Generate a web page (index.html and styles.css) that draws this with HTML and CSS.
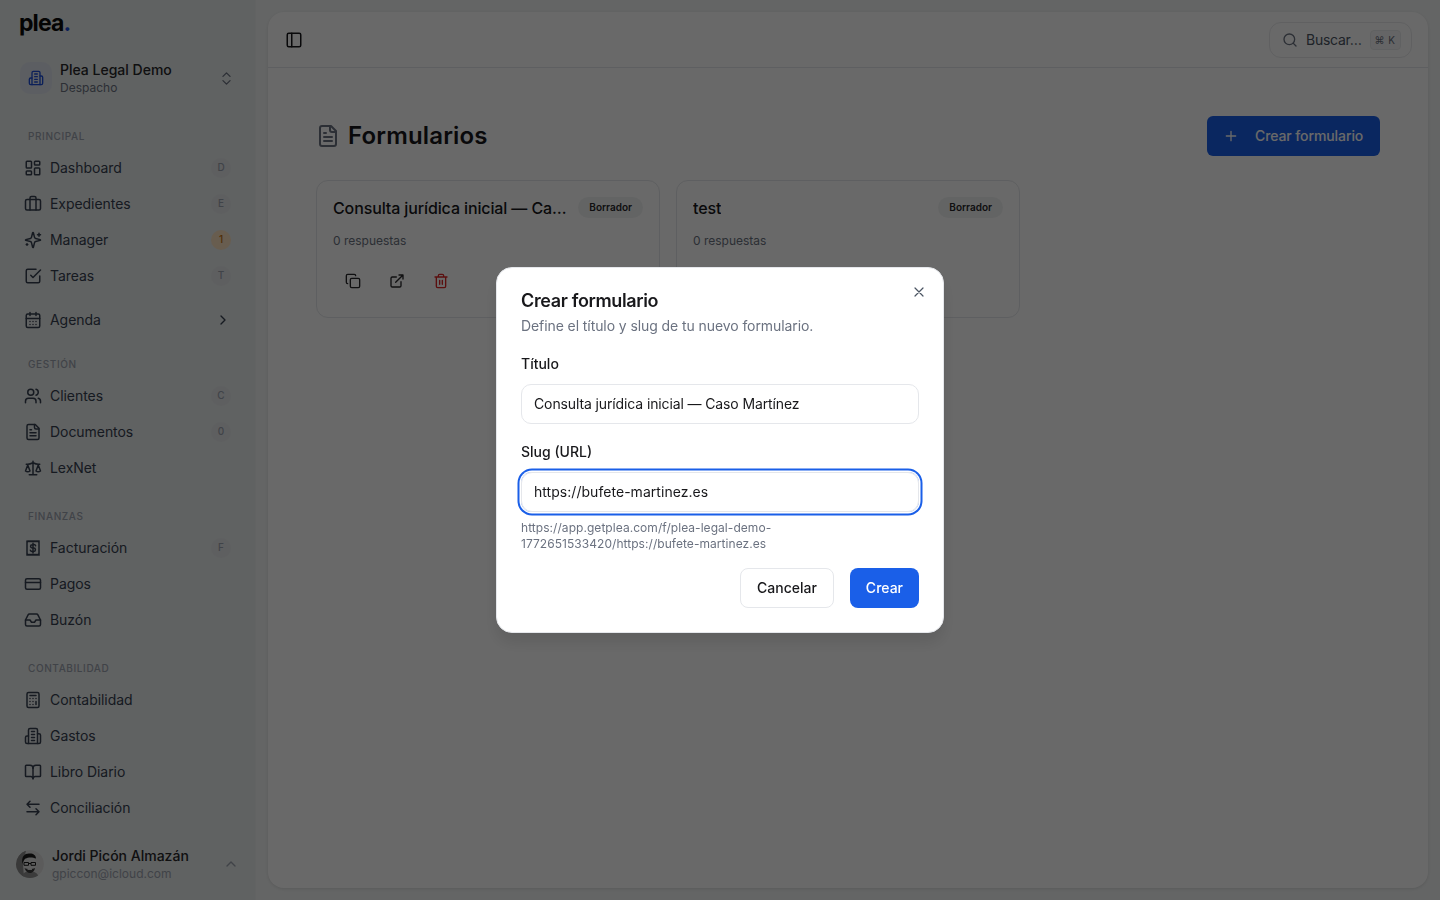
FILE: index.html
```html
<!DOCTYPE html>
<html lang="es">
<head>
<meta charset="utf-8">
<title>Formularios</title>
<link rel="stylesheet" href="styles.css">
</head>
<body>
<svg class="defs" aria-hidden="true">
  <symbol id="i-dash" viewBox="0 0 24 24"><rect x="3" y="3" width="7" height="9" rx="1"/><rect x="14" y="3" width="7" height="5" rx="1"/><rect x="14" y="12" width="7" height="9" rx="1"/><rect x="3" y="16" width="7" height="5" rx="1"/></symbol>
  <symbol id="i-brief" viewBox="0 0 24 24"><path d="M16 20V4a2 2 0 0 0-2-2h-4a2 2 0 0 0-2 2v16"/><rect x="2" y="6" width="20" height="14" rx="2"/></symbol>
  <symbol id="i-spark" viewBox="0 0 24 24"><path d="M9.937 15.5A2 2 0 0 0 8.5 14.063l-6.135-1.582a.5.5 0 0 1 0-.962L8.5 9.936A2 2 0 0 0 9.937 8.5l1.582-6.135a.5.5 0 0 1 .963 0L14.063 8.5A2 2 0 0 0 15.5 9.937l6.135 1.581a.5.5 0 0 1 0 .964L15.5 14.063a2 2 0 0 0-1.437 1.437l-1.582 6.135a.5.5 0 0 1-.963 0z"/><path d="M20 3v4M22 5h-4M4 17v2M5 18H3"/></symbol>
  <symbol id="i-check" viewBox="0 0 24 24"><path d="m9 11 3 3L22 4"/><path d="M21 12v7a2 2 0 0 1-2 2H5a2 2 0 0 1-2-2V5a2 2 0 0 1 2-2h11"/></symbol>
  <symbol id="i-cal" viewBox="0 0 24 24"><path d="M8 2v4M16 2v4"/><rect x="3" y="4" width="18" height="18" rx="2"/><path d="M3 10h18M8 14h.01M12 14h.01M16 14h.01M8 18h.01M12 18h.01M16 18h.01"/></symbol>
  <symbol id="i-users" viewBox="0 0 24 24"><path d="M16 21v-2a4 4 0 0 0-4-4H6a4 4 0 0 0-4 4v2"/><circle cx="9" cy="7" r="4"/><path d="M22 21v-2a4 4 0 0 0-3-3.87M16 3.13a4 4 0 0 1 0 7.75"/></symbol>
  <symbol id="i-file" viewBox="0 0 24 24"><path d="M15 2H6a2 2 0 0 0-2 2v16a2 2 0 0 0 2 2h12a2 2 0 0 0 2-2V7Z"/><path d="M14 2v4a2 2 0 0 0 2 2h4M10 9H8M16 13H8M16 17H8"/></symbol>
  <symbol id="i-scale" viewBox="0 0 24 24"><path d="m16 16 3-8 3 8c-.87.65-1.92 1-3 1s-2.13-.35-3-1Z"/><path d="m2 16 3-8 3 8c-.87.65-1.92 1-3 1s-2.13-.35-3-1Z"/><path d="M7 21h10M12 3v18M3 7h2c2 0 5-1 7-2 2 1 5 2 7 2h2"/></symbol>
  <symbol id="i-bill" viewBox="0 0 24 24"><path d="M4 2.500l1.330 1 1.330-1 1.330 1 1.340-1 1.330 1 1.340-1 1.330 1 1.330-1 1.340 1 1.330-1 1.330 1L20 2.500v19l-1.330-1-1.330 1-1.340-1-1.330 1-1.330-1-1.340 1-1.330-1-1.340 1-1.330-1-1.330 1-1.340-1L4 21.500Z"/><path d="M15.500 9a2.300 2.300 0 0 0-2.300-1.500h-2.200a2.200 2.200 0 0 0 0 4.500h2a2.200 2.200 0 0 1 0 4.500h-2.200A2.300 2.300 0 0 1 8.500 15M12 5.500v13"/></symbol>
  <symbol id="i-card" viewBox="0 0 24 24"><rect x="2" y="5" width="20" height="14" rx="2"/><path d="M2 10h20"/></symbol>
  <symbol id="i-inbox" viewBox="0 0 24 24"><path d="M22 12h-6l-2 3h-4l-2-3H2"/><path d="M5.450 5.110 2 12v6a2 2 0 0 0 2 2h16a2 2 0 0 0 2-2v-6l-3.450-6.890A2 2 0 0 0 16.760 4H7.240a2 2 0 0 0-1.790 1.110z"/></symbol>
  <symbol id="i-calc" viewBox="0 0 24 24"><rect x="4" y="2" width="16" height="20" rx="2"/><path d="M8 6h8M16 14v4M16 10h.01M12 10h.01M8 10h.01M12 14h.01M8 14h.01M12 18h.01M8 18h.01"/></symbol>
  <symbol id="i-bldg" viewBox="0 0 24 24"><path d="M6 22V4a2 2 0 0 1 2-2h8a2 2 0 0 1 2 2v18Z"/><path d="M6 12H4a2 2 0 0 0-2 2v6a2 2 0 0 0 2 2h2M18 9h2a2 2 0 0 1 2 2v9a2 2 0 0 1-2 2h-2M10 6h4M10 10h4M10 14h4M10 18h4"/></symbol>
  <symbol id="i-book" viewBox="0 0 24 24"><path d="M12 7v14"/><path d="M3 18a1 1 0 0 1-1-1V4a1 1 0 0 1 1-1h5a4 4 0 0 1 4 4 4 4 0 0 1 4-4h5a1 1 0 0 1 1 1v13a1 1 0 0 1-1 1h-6a3 3 0 0 0-3 3 3 3 0 0 0-3-3z"/></symbol>
  <symbol id="i-swap" viewBox="0 0 24 24"><path d="M8 3 4 7l4 4M4 7h16M16 21l4-4-4-4M20 17H4"/></symbol>
  <symbol id="i-updown" viewBox="0 0 24 24"><path d="m7 15 5 5 5-5M7 9l5-5 5 5"/></symbol>
  <symbol id="i-right" viewBox="0 0 24 24"><path d="m9 18 6-6-6-6"/></symbol>
  <symbol id="i-up" viewBox="0 0 24 24"><path d="m18 15-6-6-6 6"/></symbol>
  <symbol id="i-panel" viewBox="0 0 24 24"><rect x="3" y="3" width="18" height="18" rx="2"/><path d="M9 3v18"/></symbol>
  <symbol id="i-search" viewBox="0 0 24 24"><path d="m21 21-4.300-4.300"/><circle cx="11" cy="11" r="8"/></symbol>
  <symbol id="i-plus" viewBox="0 0 24 24"><path d="M5 12h14M12 5v14"/></symbol>
  <symbol id="i-copy" viewBox="0 0 24 24"><rect x="8" y="8" width="14" height="14" rx="2"/><path d="M4 16c-1.100 0-2-.9-2-2V4c0-1.100.9-2 2-2h10c1.100 0 2 .9 2 2"/></symbol>
  <symbol id="i-ext" viewBox="0 0 24 24"><path d="M15 3h6v6M10 14 21 3M18 13v6a2 2 0 0 1-2 2H5a2 2 0 0 1-2-2V8a2 2 0 0 1 2-2h6"/></symbol>
  <symbol id="i-trash" viewBox="0 0 24 24"><path d="M3 6h18M19 6v14c0 1-1 2-2 2H7c-1 0-2-1-2-2V6M8 6V4c0-1 1-2 2-2h4c1 0 2 1 2 2v2M10 11v6M14 11v6"/></symbol>
  <symbol id="i-x" viewBox="0 0 24 24"><path d="M18 6 6 18M6 6l12 12"/></symbol>
</svg>

<div class="app">
  <aside class="sidebar">
    <div class="logo">plea<span class="logo-dot">.</span></div>
    <div class="org">
      <span class="org-icon"><svg class="ic ic-16"><use href="#i-bldg"/></svg></span>
      <div class="org-text">
        <div class="org-name">Plea Legal Demo</div>
        <div class="org-sub">Despacho</div>
      </div>
      <svg class="ic ic-17 muted"><use href="#i-updown"/></svg>
    </div>

    <nav class="nav">
      <div class="group group-first">
        <div class="group-label">PRINCIPAL</div>
        <a class="item"><svg class="ic"><use href="#i-dash"/></svg><span class="item-text">Dashboard</span><span class="key">D</span></a>
        <a class="item"><svg class="ic"><use href="#i-brief"/></svg><span class="item-text">Expedientes</span><span class="key">E</span></a>
        <a class="item"><svg class="ic"><use href="#i-spark"/></svg><span class="item-text">Manager</span><span class="key key-alert">1</span></a>
        <a class="item"><svg class="ic"><use href="#i-check"/></svg><span class="item-text">Tareas</span><span class="key">T</span></a>
        <a class="item item-agenda"><svg class="ic"><use href="#i-cal"/></svg><span class="item-text">Agenda</span><svg class="ic ic-16"><use href="#i-right"/></svg></a>
      </div>
      <div class="group group-tight">
        <div class="group-label">GESTIÓN</div>
        <a class="item"><svg class="ic"><use href="#i-users"/></svg><span class="item-text">Clientes</span><span class="key">C</span></a>
        <a class="item"><svg class="ic"><use href="#i-file"/></svg><span class="item-text">Documentos</span><span class="key">0</span></a>
        <a class="item"><svg class="ic"><use href="#i-scale"/></svg><span class="item-text">LexNet</span></a>
      </div>
      <div class="group">
        <div class="group-label">FINANZAS</div>
        <a class="item"><svg class="ic"><use href="#i-bill"/></svg><span class="item-text">Facturación</span><span class="key">F</span></a>
        <a class="item"><svg class="ic"><use href="#i-card"/></svg><span class="item-text">Pagos</span></a>
        <a class="item"><svg class="ic"><use href="#i-inbox"/></svg><span class="item-text">Buzón</span></a>
      </div>
      <div class="group">
        <div class="group-label">CONTABILIDAD</div>
        <a class="item"><svg class="ic"><use href="#i-calc"/></svg><span class="item-text">Contabilidad</span></a>
        <a class="item"><svg class="ic"><use href="#i-bldg"/></svg><span class="item-text">Gastos</span></a>
        <a class="item"><svg class="ic"><use href="#i-book"/></svg><span class="item-text">Libro Diario</span></a>
        <a class="item"><svg class="ic"><use href="#i-swap"/></svg><span class="item-text">Conciliación</span></a>
      </div>
    </nav>

    <div class="user">
      <svg class="avatar" viewBox="0 0 28 28" aria-hidden="true">
        <circle cx="14" cy="14" r="14" fill="#dedede"/>
        <path d="M0 14A14 14 0 0 1 10 .6L7 14l1 14H7A14 14 0 0 1 0 14z" fill="#8a8a8a"/>
        <path d="M5 28c1-5 5-7 9-7s8 2 9 7z" fill="#8f8f8f"/>
        <ellipse cx="14" cy="14" rx="6.500" ry="8" fill="#e4e4e4"/>
        <path d="M6.500 14C5 6 9 3 14 3.500c3.500 0 6 2 6 5-3-1.500-8-1.500-10.500 0-1.500 1-2.500 3-3 5.500z" fill="#1c1c1c"/>
        <path d="M8 12.500h4.500v2.800H8zM15 12.500h4.500v2.800H15zM12.500 13.500H15" fill="none" stroke="#1c1c1c" stroke-width="1"/>
        <path d="M8.500 18c2 1.500 8 1.500 10.500 0-.5 3.500-3 5-5 5s-4.500-1.500-5.500-5z" fill="#3a3a3a"/>
        <path d="M11.500 19.500h4.500" stroke="#e8e8e8" stroke-width=".9"/>
      </svg>
      <div class="user-text">
        <div class="user-name">Jordi Picón Almazán</div>
        <div class="user-mail">gpiccon@icloud.com</div>
      </div>
      <svg class="ic ic-16 faint"><use href="#i-up"/></svg>
    </div>
  </aside>

  <main class="main">
    <header class="topbar">
      <svg class="ic"><use href="#i-panel"/></svg>
      <div class="search">
        <svg class="ic ic-16 muted"><use href="#i-search"/></svg>
        <span class="search-text">Buscar…</span>
        <kbd class="kbd">⌘ K</kbd>
      </div>
    </header>
    <section class="content">
      <div class="page-head">
        <h1 class="page-title"><svg class="ic ic-24 muted"><use href="#i-file"/></svg>Formularios</h1>
        <button class="btn-primary-lg"><svg class="ic ic-16"><use href="#i-plus"/></svg><span class="btn-label">Crear formulario</span></button>
      </div>
      <div class="cards">
        <article class="card">
          <div class="card-top">
            <h2 class="card-title">Consulta jurídica inicial — Caso Martínez</h2>
            <span class="badge">Borrador</span>
          </div>
          <p class="card-meta">0 respuestas</p>
          <div class="card-actions">
            <span class="act"><svg class="ic ic-16"><use href="#i-copy"/></svg></span>
            <span class="act"><svg class="ic ic-16"><use href="#i-ext"/></svg></span>
            <span class="act act-danger"><svg class="ic ic-16"><use href="#i-trash"/></svg></span>
          </div>
        </article>
        <article class="card">
          <div class="card-top">
            <h2 class="card-title">test</h2>
            <span class="badge">Borrador</span>
          </div>
          <p class="card-meta">0 respuestas</p>
          <div class="card-actions">
            <span class="act"><svg class="ic ic-16"><use href="#i-copy"/></svg></span>
            <span class="act"><svg class="ic ic-16"><use href="#i-ext"/></svg></span>
            <span class="act act-danger"><svg class="ic ic-16"><use href="#i-trash"/></svg></span>
          </div>
        </article>
      </div>
    </section>
  </main>
</div>

<div class="overlay">
  <div class="modal" role="dialog" aria-modal="true">
    <svg class="ic ic-16 modal-close"><use href="#i-x"/></svg>
    <h2 class="modal-title">Crear formulario</h2>
    <p class="modal-desc">Define el título y slug de tu nuevo formulario.</p>
    <label class="field-label">Título</label>
    <div class="input input-title">Consulta jurídica inicial — Caso Martínez</div>
    <label class="field-label">Slug (URL)</label>
    <div class="input input-focus">https://bufete-martinez.es</div>
    <p class="helper">https://app.getplea.com/f/plea-legal-demo-<br>1772651533420/https://bufete-martinez.es</p>
    <div class="modal-actions">
      <button class="btn btn-outline">Cancelar</button>
      <button class="btn btn-primary">Crear</button>
    </div>
  </div>
</div>
</body>
</html>
```

FILE: styles.css
```css
* { box-sizing: border-box; }
html, body { margin: 0; height: 100%; }
body {
  font-family: "Inter", "Liberation Sans", sans-serif;
  font-size: 14px;
  color: #18181b;
  background: #f2f4f4;
  overflow: hidden;
}
.defs { position: absolute; width: 0; height: 0; }
.ic {
  width: 18px; height: 18px; flex: none;
  fill: none; stroke: currentColor; stroke-width: 2;
  stroke-linecap: round; stroke-linejoin: round;
}
.ic-16 { width: 16px; height: 16px; }
.ic-17 { width: 17px; height: 17px; stroke-width: 1.800; }
.ic-24 { width: 24px; height: 24px; }
.muted { color: #6b7280; }
.faint { color: #9ca3af; }

.app { display: flex; height: 900px; }

/* Sidebar */
.sidebar {
  width: 256px; flex: none; height: 900px;
  display: flex; flex-direction: column;
  background: #e9eded;
  border-right: 1px solid #eef1f1;
}
.logo {
  margin: 8px 0 0 19px; height: 30px;
  font-size: 23px; line-height: 30px; font-weight: 700; letter-spacing: -.9px; color: #0a0a0a;
}
.logo-dot { color: #1d4ed8; }
.org { display: flex; align-items: center; margin: 24px 20px 0 20px; height: 32px; }
.org-icon {
  width: 32px; height: 32px; border-radius: 10px; flex: none;
  background: #e0e5ee; color: #1d4ed8;
  display: flex; align-items: center; justify-content: center;
  margin-right: 8px;
}
.org-text { flex: 1; min-width: 0; }
.org-name { font-size: 14px; line-height: 18px; font-weight: 500; color: #27272a; }
.org-sub { margin-top: 1px; font-size: 12px; line-height: 16px; color: #6b7280; }
.nav { padding: 0 16px; flex: 1; }
.group { padding-top: 14px; }
.group-first { padding-top: 26px; }
.group-tight { padding-top: 10px; }
.group-label {
  height: 30px; padding: 10px 0 0 12px;
  font-size: 10px; line-height: 12px; font-weight: 500; letter-spacing: .6px; color: #9ca3af;
}
.item {
  display: flex; align-items: center; height: 36px;
  padding: 0 8px; color: #374151;
}
.item-agenda { margin-top: 8px; }
.item-text { flex: 1; margin-left: 8px; padding-bottom: 2px; font-size: 14px; letter-spacing: -.05px; }
.key {
  width: 20px; height: 20px; border-radius: 50%; margin-top: -1px; padding-bottom: 1px;
  background: #e4e7ea; color: #9ca3af;
  font-size: 10px; font-weight: 500;
  display: flex; align-items: center; justify-content: center;
}
.key-alert { background: #fde2bf; color: #c2700f; }
.user { display: flex; align-items: center; height: 36px; margin: 0 16px 18px 16px; }
.avatar { width: 28px; height: 28px; flex: none; border-radius: 50%; margin-right: 8px; }
.user-text { flex: 1; min-width: 0; }
.user-name { font-size: 14px; line-height: 18px; font-weight: 500; color: #27272a; }
.user-mail { margin-top: 1px; font-size: 12px; line-height: 16px; color: #9ca3af; }

/* Main */
.main {
  flex: 1; margin: 12px;
  background: #fff; border-radius: 16px;
  box-shadow: 0 1px 3px rgba(0,0,0,.1);
  display: flex; flex-direction: column; min-width: 0;
}
.topbar {
  height: 56px; flex: none; display: flex; align-items: center; justify-content: space-between;
  padding: 0 16px 0 17px; border-bottom: 1px solid #e5e7eb;
}
.search {
  width: 143px; height: 36px; border: 1px solid #e9eaec; border-radius: 12px;
  display: flex; align-items: center; padding: 0 12px; gap: 8px;
}
.search-text { color: #4b5563; font-size: 14px; flex: 1; white-space: nowrap; letter-spacing: -.25px; }
.kbd {
  font-family: "Inter", sans-serif; font-size: 10px; letter-spacing: .5px; color: #6b7280;
  width: 31px; height: 20px; border: 1px solid #eaebed; border-radius: 4px; background: #f6f6f7;
  display: flex; align-items: center; justify-content: center; flex: none;
}
.content { padding: 48px; flex: 1; }
.page-head { display: flex; align-items: center; justify-content: space-between; height: 40px; }
.page-title { margin: 0; display: flex; align-items: center; gap: 8px; font-size: 24px; line-height: 32px; font-weight: 600; letter-spacing: .15px; color: #18181b; }
.btn-primary-lg {
  height: 40px; width: 173px; border: 0; border-radius: 6px; background: #1a5fe8; color: #fff;
  font: 500 14px "Inter", sans-serif; white-space: nowrap;
  display: flex; align-items: center; padding: 0 16px; gap: 16px;
}
.btn-label { padding-bottom: 2px; letter-spacing: -.1px; }
.cards { display: grid; grid-template-columns: repeat(3, 1fr); gap: 16px; margin-top: 24px; }
.card { border: 1px solid #e5e7eb; border-radius: 12px; padding: 16px; height: 138px; display: flex; flex-direction: column; min-width: 0; }
.card-top { display: flex; align-items: center; justify-content: space-between; gap: 8px; height: 22px; }
.card-title { margin: 0; font-size: 16px; font-weight: 500; letter-spacing: -.12px; color: #18181b; white-space: nowrap; overflow: hidden; text-overflow: ellipsis; min-width: 0; }
.badge {
  flex: none; height: 21px; padding: 0 11px; border-radius: 11px; background: #f1f3f3;
  font-size: 10px; font-weight: 600; color: #27272a; display: flex; align-items: center;
  position: relative; top: -1px;
}
.card-meta { margin: 14px 0 0; font-size: 12px; line-height: 16px; color: #6b7280; }
.card-actions { display: flex; gap: 4px; margin-top: 12px; }
.act { width: 40px; height: 40px; display: flex; align-items: center; justify-content: center; color: #27272a; }
.act-danger { color: #dc2626; }

/* Modal */
.overlay {
  position: fixed; inset: 0; background: rgba(0,0,0,.59); backdrop-filter: blur(.4px);
  display: flex; align-items: center; justify-content: center;
}
.modal {
  position: relative; width: 448px; height: 366px; background: #fff; border: 1px solid #e5e7eb; border-radius: 16px;
  padding: 24px; box-shadow: 0 10px 15px rgba(0,0,0,.1);
}
.modal-close { position: absolute; top: 16px; right: 16px; color: #4b5563; stroke-width: 1.800; }
.modal-title { margin: 0; font-size: 18px; line-height: 18px; font-weight: 600; letter-spacing: -.36px; color: #18181b; }
.modal-desc { margin: 6px 0 0; font-size: 14px; line-height: 20px; letter-spacing: -.085px; color: #6b7280; }
.field-label { display: block; margin-top: 20px; font-size: 14px; line-height: 16px; font-weight: 500; color: #18181b; }
.input {
  margin-top: 12px; height: 40px; border: 1px solid #e5e7eb; border-radius: 10px;
  padding: 0 12px 2px; display: flex; align-items: center; font-size: 14px; color: #18181b;
}
.input-title { letter-spacing: -.12px; }
.input-focus { border-radius: 11px; letter-spacing: .04px; box-shadow: 0 0 0 1.500px #fff, 0 0 0 3.500px #1a5fe8; }
.helper { margin: 8px 0 0; font-size: 12px; line-height: 16px; letter-spacing: .05px; color: #6b7280; }
.modal-actions { display: flex; justify-content: flex-end; gap: 16px; margin-top: 16px; }
.btn { height: 40px; border-radius: 8px; font: 500 14px "Inter", sans-serif; padding: 0 16px 2px; }
.btn-outline { background: #fff; border: 1px solid #e5e7eb; color: #18181b; }
.btn-primary { background: #1a5fe8; border: 0; color: #fff; }
```
